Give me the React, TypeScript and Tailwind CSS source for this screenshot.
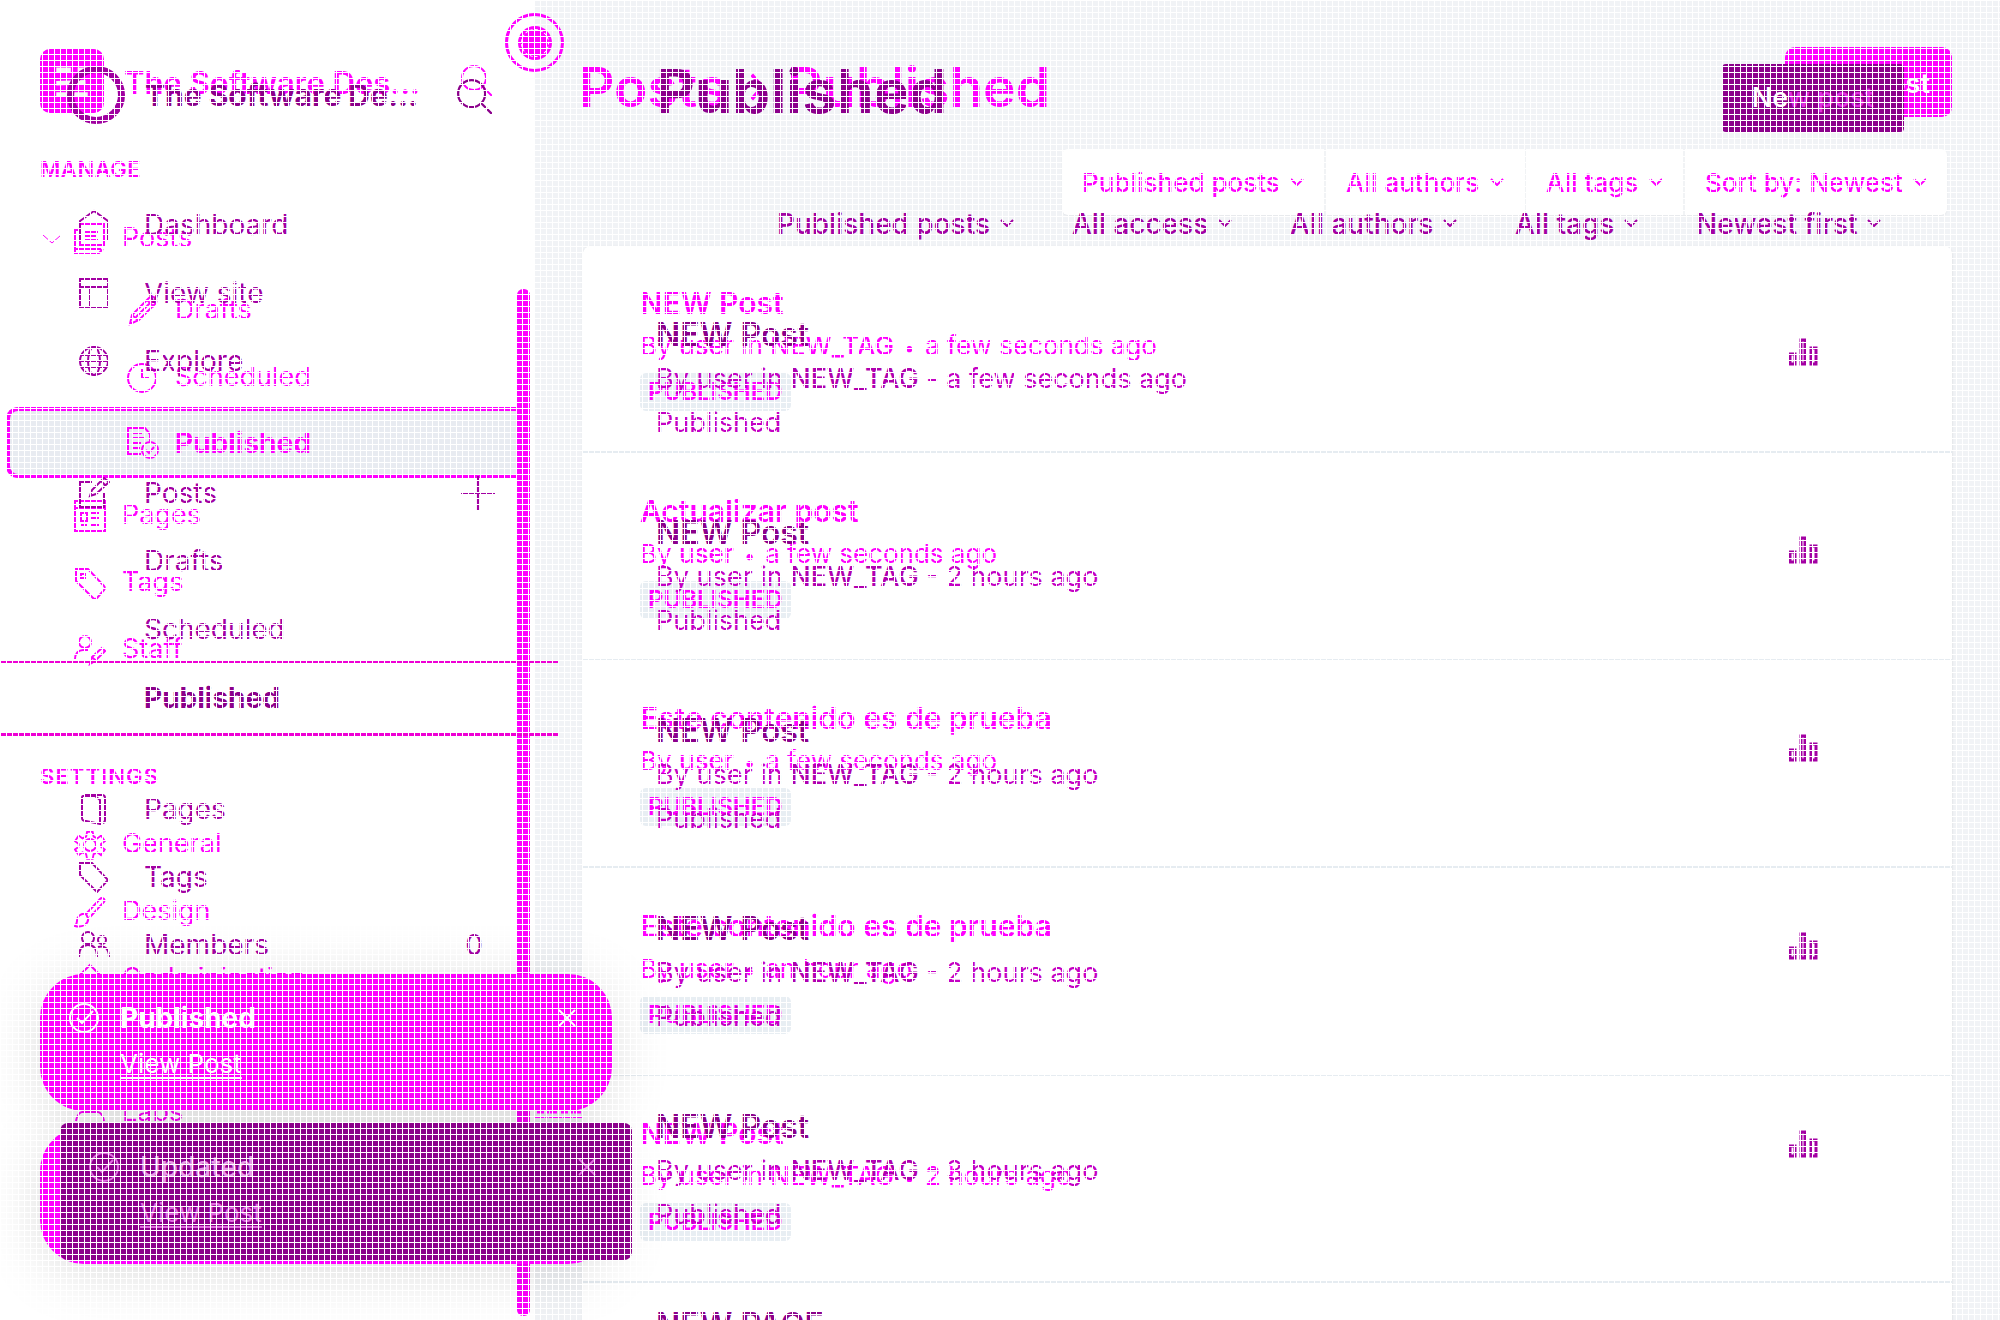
import React from "react";

type IconProps = { children: React.ReactNode; className?: string; box?: string };

function Icon({ children, className = "size-8", box = "0 0 32 32" }: IconProps) {
  return (
    <svg viewBox={box} className={`shrink-0 ${className}`} fill="none" stroke="currentColor" strokeWidth="2" aria-hidden="true">
      {children}
    </svg>
  );
}

const icons = {
  posts: <><path d="M6 1h24v21H6zM6 7H1v23h24l4-4M10 9h14M10 13h12M10 17h14M1 26h26" /></>,
  pencil: <><path d="M3 29l2-9L22 3c2-2 4-2 6 0s2 4 0 6L12 25l-9 4zM5 20l7 6M9 22L25 6M20 5l7 7" /></>,
  clock: <><circle cx="15" cy="16" r="14" /><path d="M15 7v9h7" /></>,
  publishedDoc: <><path d="M14 27H1V1h17l5 6v7M5 6h10M5 11h13M5 16h9M5 21h8" /><circle cx="23" cy="23" r="8" /><path d="M19 23l3 3 5-6" /></>,
  pages: <><path d="M1 1h30v30H1zM1 8h30" /><path d="M7 13h6v8H7zM17 13h8M17 18h8M7 25h6M17 25h8" /></>,
  tagHole: <><path d="M2 2h12l16 17c1 1 1 3 0 4l-7 8c-1 1-3 1-4 0L2 14z" /><rect x="7" y="7" width="4" height="4" /></>,
  tag: <><path d="M2 2h12l16 17-11 12L2 14z" /></>,
  staff: <><circle cx="11" cy="8" r="6" /><path d="M1 25c0-6 4-9 8-9h5M16 30l2-7L28 14l3 3-10 10-5 3zM18 23l4 4" /></>,
  gear: <><circle cx="16" cy="16" r="6" /><path d="M13 2h6l1 5 4 2 4-3 4 6-4 3v3l4 3-4 6-4-3-4 2-1 5h-6l-1-5-4-2-4 3-4-6 4-3v-3l-4-3 4-6 4 3 4-2z" transform="translate(1 1) scale(.93)" /></>,
  brush: <><path d="M12 18L26 3c2-2 6 0 4 3L16 21M12 18c-6-1-9 3-9 7 0 3-1 4-2 5 7 2 14-2 13-8z" /></>,
  code: <path d="M16 2l13 13-13 13L3 15z" />,
  labs: <><path d="M6 12C8 4 12 2 16 2s8 2 10 10M2 24c1-6 4-9 6-9h16c2 0 5 3 6 9M10 12l3-3M19 12l3-3" /></>,
  house: <><path d="M2 12L16 2l14 10v22H2z" /></>,
  layout: <><path d="M2 2h28v28H2zM2 10h28M12 10v20" /></>,
  globe: <><circle cx="16" cy="16" r="14" /><ellipse cx="16" cy="16" rx="6" ry="14" /><path d="M4 10h24M2 16h28M4 22h24" /></>,
  compose: <><path d="M14 5H2v25h24V16M12 19l2-6L26 1l5 4-13 12-6 2zM23 4l4 4" /></>,
  pageStack: <><path d="M7 2h17c2 0 3 1 3 3v22c0 2-1 3-3 3M5 3h12l5 4v24L8 28c-3 0-4-1-4-3V5c0-1 0-2 1-2z" /></>,
  members: <><circle cx="10" cy="9" r="6" /><circle cx="24" cy="11" r="4" /><path d="M1 28c0-8 3-12 9-12s9 4 9 12M20 18c7-2 11 2 11 10" /></>,
};

type IconName = keyof typeof icons;

function Chevron({ className }: { className: string }) {
  return (
    <Icon className={className} box="0 0 14 8"><path d="M1 1l6 6 6-6" /></Icon>
  );
}

function Search({ className }: { className: string }) {
  return <Icon className={className}><circle cx="13" cy="13" r="12" /><path d="M22 22l9 9" /></Icon>;
}

type NavItem = { label: string; icon: IconName };

function OuterLink({ label, icon, chevron }: NavItem & { chevron?: boolean }) {
  return (
    <a href="#" className="flex h-[67px] items-center pl-[42px]">
      <span className="w-8">
        {chevron && <Icon className="h-2.5 w-5" box="0 0 20 10"><path d="M1 1l9 8 9-8" strokeWidth="1" /></Icon>}
      </span>
      <Icon><>{icons[icon]}</></Icon>
      <span className="ml-4">{label}</span>
    </a>
  );
}

function OuterSidebar() {
  return (
    <aside className="relative w-[535px] shrink-0 bg-white text-[27px] text-[#ff00ff]">
      <header className="flex items-start pt-[49px] pr-[42px] pl-10">
        <span className="flex size-16 items-center justify-center rounded-[10px] bg-[#ff00ff] text-[#f4f4f4]">
          <Icon className="size-9"><path strokeWidth="4" d="M2 6h13M21 6h9M2 18l26-1M2 28h11M18 28h12" /></Icon>
        </span>
        <h2 className="ml-5 flex-1 text-[31px] leading-[68px] font-semibold">The Software Des...</h2>
        <button type="button" aria-label="Search posts" className="mt-4"><Search className="size-8" /></button>
      </header>
      <h3 className="mt-9 pl-10 text-[22px] leading-8 font-semibold tracking-wide">MANAGE</h3>
      <nav aria-label="Manage" className="mt-5">
        <OuterLink label="Posts" icon="posts" chevron />
        <div className="mt-[5px]">
          <a href="#" className="flex h-[67px] items-center pl-[127px]"><Icon><>{icons.pencil}</></Icon><span className="ml-4">Drafts</span></a>
          <a href="#" className="flex h-[67px] items-center pl-[127px]"><Icon><>{icons.clock}</></Icon><span className="ml-4">Scheduled</span></a>
          <a href="#" aria-current="page" className="-mt-1 mr-[18px] mb-1 ml-1.5 flex h-[71px] items-center rounded-l-xl border-4 border-r-0 border-[#ff00ff] bg-[#e8ebf1] pl-[117px] text-[28px] font-bold">
            <Icon><>{icons.publishedDoc}</></Icon><span className="ml-4">Published</span>
          </a>
        </div>
        <OuterLink label="Pages" icon="pages" />
        <OuterLink label="Tags" icon="tagHole" />
        <OuterLink label="Staff" icon="staff" />
      </nav>
      <h3 className="mt-[77px] pl-10 text-[22px] leading-8 font-semibold tracking-wider">SETTINGS</h3>
      <nav aria-label="Settings" className="mt-[19px]">
        <OuterLink label="General" icon="gear" />
        <OuterLink label="Design" icon="brush" />
        <OuterLink label="Code injection" icon="code" />
        <OuterLink label="Integrations" icon="layout" />
        <OuterLink label="Labs" icon="labs" />
      </nav>
      <div className="absolute top-[289px] right-[5px] bottom-1 w-[13px] rounded-md bg-[#ff00ff]" />
      <div className="absolute top-[13px] -right-[29px] flex size-[59px] items-center justify-center rounded-full border-[3px] border-[#ff00ff]">
        <div className="flex size-[34px] items-center justify-center rounded-full bg-[#ff00ff]">
          <div className="size-7 rounded-full border border-dashed border-white" />
        </div>
      </div>
    </aside>
  );
}

function OuterFilter({ name, value }: { name: string; value: string }) {
  return (
    <label className="relative flex items-center border-r-2 border-[#f1f3f5] last:border-r-0">
      <select aria-label={name} className="h-[66px] appearance-none bg-transparent pr-11 pl-5 text-[26px] font-medium text-[#ff00ff]">
        <option>{value}</option>
      </select>
      <Chevron className="pointer-events-none absolute right-5 h-2 w-3.5 text-[#ff00ff]" />
    </label>
  );
}

const outerPosts = [
  { title: "NEW Post", tag: "NEW_TAG", age: "a few seconds ago" },
  { title: "Actualizar post", age: "a few seconds ago" },
  { title: "Este contenido es de prueba", age: "a few seconds ago" },
  { title: "Este contenido es de prueba", age: "an hour ago" },
  { title: "NEW Post", tag: "NEW_TAG", age: "2 hours ago" },
];

function OuterMain() {
  return (
    <main className="min-w-0 flex-1 px-12 pt-[47px] text-[#ff00ff]">
      <header className="flex h-[70px] items-start justify-between">
        <h1 className="-ml-1 flex items-center text-[55px] leading-[80px] font-semibold">
          Posts
          <Icon className="mx-5 h-7 w-5" box="0 0 10 16"><path d="M2 1l6 7-6 7" /></Icon>
          Published
        </h1>
        <button type="button" className="h-[70px] rounded-[10px] bg-[#ff00ff] px-[22px] text-[27px] leading-[74px] font-semibold text-white">New post</button>
      </header>
      <div className="mt-8 flex justify-end pr-[5px]">
        <div className="flex rounded-md bg-white shadow-xs">
          <OuterFilter name="Type" value="Published posts" />
          <OuterFilter name="Author" value="All authors" />
          <OuterFilter name="Tag" value="All tags" />
          <OuterFilter name="Order" value="Sort by: Newest" />
        </div>
      </div>
      <ol className="mt-[31px] h-screen rounded-t-lg bg-white shadow-sm">
        {outerPosts.map((post, i) => (
          <li key={i} className="border-b-2 border-[#e6ecf1] pt-[39px] pb-10 pl-[57px] even:pt-10">
            <h3 className="text-[30px] leading-9 font-semibold">{post.title}</h3>
            <p className="mt-2 text-[26px] leading-[34px]">
              By <span className="font-medium">user</span>
              {post.tag && <> in <span className="font-medium">{post.tag}</span></>}
              <span className="mx-2.5 text-xl leading-none">•</span>
              {post.age}
            </p>
            <span className="mt-2.5 block h-[38px] w-fit rounded-md bg-[#e8eef3] px-2 text-[24px] leading-[38px] font-semibold">PUBLISHED</span>
          </li>
        ))}
      </ol>
    </main>
  );
}

function InnerLink({ label, icon }: { label: string; icon?: IconName }) {
  return (
    <a href="#" className="flex h-[68px] items-center pl-[78px]">
      <span className="w-[66px]">{icon && <Icon><>{icons[icon]}</></Icon>}</span>
      {label}
    </a>
  );
}

function InnerSidebar() {
  return (
    <aside className="w-[560px] shrink-0 text-[28px] text-[#a300a3]">
      <header className="flex items-center pt-[66px] pl-[67px] text-[#8b008b]">
        <span className="size-[58px] rounded-full border-[7px] border-[#a000a0]" />
        <h2 className="ml-5 w-[312px] text-[30px] leading-[58px] font-bold">The Software De...</h2>
        <button type="button" aria-label="Search site" className="mt-1"><Search className="size-9" /></button>
      </header>
      <nav aria-label="Site" className="mt-[67px]">
        <InnerLink label="Dashboard" icon="house" />
        <InnerLink label="View site" icon="layout" />
        <InnerLink label="Explore" icon="globe" />
      </nav>
      <nav aria-label="Content" className="mt-16">
        <div className="flex items-center justify-between pr-[65px]">
          <InnerLink label="Posts" icon="compose" />
          <button type="button" aria-label="Add post"><Icon className="size-[34px]"><path d="M16 0v32M0 16h32" /></Icon></button>
        </div>
        <InnerLink label="Drafts" />
        <InnerLink label="Scheduled" />
        <a href="#" aria-current="page" className="-mt-[3px] mr-0.5 flex h-[76px] items-center border-y-[3px] border-[#ee00d4] pl-36 font-bold text-[#8b008b]">Published</a>
      </nav>
      <nav aria-label="Manage content" className="mt-[39px]">
        <InnerLink label="Pages" icon="pageStack" />
        <InnerLink label="Tags" icon="tag" />
        <div className="flex items-center justify-between pr-[77px]">
          <InnerLink label="Members" icon="members" />
          <span>0</span>
        </div>
      </nav>
    </aside>
  );
}

function InnerFilter({ name, value }: { name: string; value: string }) {
  return (
    <label className="relative flex items-center">
      <select aria-label={name} className="h-10 appearance-none bg-transparent pr-[23px] text-[28px] font-medium text-[#a300a3]">
        <option>{value}</option>
      </select>
      <Chevron className="pointer-events-none absolute right-0 h-2 w-3.5 text-[#a300a3]" />
    </label>
  );
}

const innerPosts = [
  { title: "NEW Post", age: "a few seconds ago" },
  { title: "NEW Post", age: "2 hours ago" },
  { title: "NEW Post", age: "2 hours ago" },
  { title: "NEW Post", age: "2 hours ago" },
  { title: "NEW Post", age: "3 hours ago" },
  { title: "NEW PAGE", age: "3 hours ago" },
];

function InnerMain() {
  return (
    <main className="min-w-0 flex-1 px-24 pt-16">
      <header className="flex items-start justify-between">
        <h1 className="text-[60px] leading-[54px] font-bold text-[#8b008b]">Published</h1>
        <button type="button" className="h-[68px] rounded bg-[#8b008b] px-[30px] text-[27px] font-medium text-white">Ne<span className="text-[#e030e0]">w post</span></button>
      </header>
      <div className="mt-[71px] flex justify-end gap-[58px] pr-[23px]">
        <InnerFilter name="Post type" value="Published posts" />
        <InnerFilter name="Access" value="All access" />
        <InnerFilter name="Post author" value="All authors" />
        <InnerFilter name="Post tag" value="All tags" />
        <InnerFilter name="Sorting" value="Newest first" />
      </div>
      <ol className="mt-[54px]">
        {innerPosts.map((post, i) => (
          <li key={i} className="flex h-[198px] items-start justify-between pt-5 pr-[86px]">
            <div className="flex flex-col gap-2 text-[27px] leading-9 text-[#c400c4]">
              <h3 className="text-[32px] leading-9 font-semibold text-[#8b008b]">{post.title}</h3>
              <p>By user in <span className="font-medium text-[#b000b0]">NEW_TAG</span> - {post.age}</p>
              <p>Published</p>
            </div>
            <a href="#" aria-label="Analytics" className="mt-[21px] text-[#a300a3]">
              <Icon className="h-7 w-[30px]" box="0 0 30 28"><path strokeWidth="3" d="M2 16h5v10H2zM13 2h4v24h-4zM23 10h5v16h-5z" /></Icon>
            </a>
          </li>
        ))}
      </ol>
    </main>
  );
}

function CheckCircle() {
  return <Icon><circle cx="16" cy="16" r="14" /><path d="M9 16l5 5 11-12" /></Icon>;
}

function Cross() {
  return <Icon className="size-[18px]" box="0 0 18 18"><path d="M1 1l16 16M17 1L1 17" /></Icon>;
}

function OuterToast({ title }: { title: string }) {
  return (
    <section className="h-[137px] rounded-[44px] bg-[#ff00ff] pt-6 pr-9 pl-7 text-white shadow-[0_8px_60px_rgba(0,0,0,0.15)]">
      <div className="flex items-center">
        <CheckCircle />
        <h4 className="ml-5 flex-1 text-[28px] leading-10 font-bold">{title}</h4>
        <button type="button" aria-label="Dismiss"><Cross /></button>
      </div>
      <a href="#" className="mt-1.5 ml-[52px] inline-block text-[26px] leading-10 underline decoration-2 underline-offset-4">View Post</a>
    </section>
  );
}

function InnerToast() {
  return (
    <section className="h-[137px] rounded-lg bg-[#8b008b] pt-6 pr-9 pl-7 text-[#e06be0]">
      <div className="flex items-center">
        <CheckCircle />
        <h4 className="ml-5 flex-1 text-[28px] leading-10 font-medium text-[#e89ae8]">Updated</h4>
        <button type="button" aria-label="Close"><Cross /></button>
      </div>
      <a href="#" className="mt-1.5 ml-[52px] inline-block text-[26px] leading-10 underline decoration-2 underline-offset-4">View Post</a>
    </section>
  );
}

export default function App() {
  return (
    <div className="relative grid h-screen overflow-hidden bg-[#f1f3f6] font-[Inter,sans-serif]">
      <div className="flex h-screen [grid-area:1/1]">
        <OuterSidebar />
        <OuterMain />
      </div>
      <div className="relative flex h-screen [grid-area:1/1]">
        <InnerSidebar />
        <InnerMain />
      </div>
      <div className="absolute bottom-14 left-10 flex w-[572px] flex-col gap-4">
        <OuterToast title="Published" />
        <OuterToast title="Published" />
      </div>
      <svg viewBox="0 0 48 9" className="absolute bottom-[201px] left-[535px] h-[9px] w-12" stroke="#ff00ff" strokeWidth="3" fill="none" aria-hidden="true">
        <path strokeDasharray="7 2 3 1" d="M2 2h20M26 2h21" /><path strokeWidth="2" strokeDasharray="9 1 3 1" d="M0 7h47" />
      </svg>
      <div className="absolute bottom-[60px] left-[60px] w-[572px]">
        <InnerToast />
      </div>
      <div className="pointer-events-none absolute inset-0 bg-[linear-gradient(to_right,#fff_1px,transparent_1px),linear-gradient(#fff_1px,transparent_1px)] bg-[length:6px_6px]" />
    </div>
  );
}
